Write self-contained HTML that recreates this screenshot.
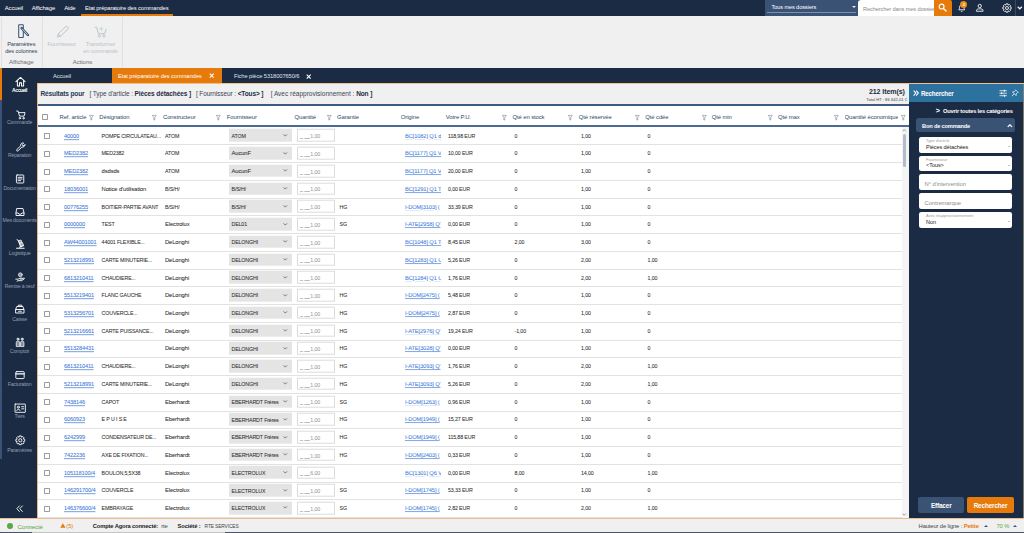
<!DOCTYPE html>
<html><head><meta charset="utf-8"><title>Etat préparatoire des commandes</title>
<style>
*{box-sizing:border-box;margin:0;padding:0}
html,body{width:1024px;height:533px;overflow:hidden;background:#f0f0f0;font-family:"Liberation Sans",sans-serif;font-size:5.6px;color:#333;-webkit-font-smoothing:antialiased}
.abs,.t{position:absolute;white-space:nowrap}
.t{line-height:1;transform:translateY(-50%)}
a{text-decoration:underline;text-decoration-thickness:.5px;text-underline-offset:.6px;text-decoration-color:rgba(60,120,216,.7);color:#3c78d8}
svg{position:absolute;overflow:visible}
/* top bar */
#topbar{position:absolute;left:0;top:0;width:1024px;height:16.3px;background:#1b2b44}
#topbar .m{position:absolute;top:9px;color:#fff;font-size:5.9px;letter-spacing:-.12px;line-height:1;transform:translateY(-50%);white-space:nowrap}
#actul{position:absolute;left:81px;top:14.4px;width:92px;height:2px;background:#e67a0a}
#dossiers{position:absolute;left:765px;top:0;width:93.5px;height:16.3px;background:#3a5375}
#dossiers .ul{position:absolute;left:2.4px;right:2.6px;top:11.5px;height:.8px;background:#7a91b2}
#search{position:absolute;left:858.2px;top:.2px;width:76.3px;height:15.5px;background:#fff;border-radius:3px 0 0 0;overflow:hidden}
#sbtn{position:absolute;left:934.3px;top:0;width:17.8px;height:15.7px;background:#e67a0a;border-radius:0 2px 0 0}
/* ribbon */
#ribbon{position:absolute;left:0;top:16.3px;width:1024px;height:51.7px;background:#f0f0f0}
.rsep{position:absolute;top:17px;width:.8px;height:50px;background:#e0e0e0}
.rl{position:absolute;font-size:5.7px;line-height:7.2px;text-align:center;color:#2f3f58;white-space:nowrap;transform:translateX(-50%);letter-spacing:-.12px}
.rl.dis{color:#bcc3cd}
.rg{position:absolute;font-size:6.1px;color:#6a6f78;transform:translate(-50%,-50%);line-height:1;letter-spacing:-.1px}
/* tabs */
#tabs{position:absolute;left:0;top:68px;width:1024px;height:15.2px;background:#1b2b44}
#tabs .tx{position:absolute;top:9px;font-size:5.75px;color:#dfe4ea;line-height:1;transform:translateY(-50%);white-space:nowrap;letter-spacing:-.1px}
#acttab{position:absolute;left:111.6px;top:0;width:110.2px;height:15.2px;background:#e67a0a}
/* sidebar */
#side{position:absolute;left:0;top:68px;width:37.2px;height:450px;background:#1b2b44}
#side .st1{position:absolute;left:0;top:0;width:2.2px;height:32.4px;background:#e67a0a}
#side .st2{position:absolute;left:0;top:32.4px;width:2.2px;height:358.6px;background:#3a5375}
.sl{position:absolute;left:19.6px;font-size:5.2px;color:#929eb0;transform:translate(-50%,-50%);line-height:1;white-space:nowrap;letter-spacing:-.2px;margin-top:.7px}
.sl.on{color:#fff;font-weight:bold;letter-spacing:-.4px;font-size:5px;margin-top:.1px}
.si{stroke:#fff;fill:none;stroke-width:1.1;stroke-linecap:round;stroke-linejoin:round}
/* content header */
#content{position:absolute;left:37.2px;top:83.2px;width:872px;height:435px;background:#fff}
#ohl{position:absolute;left:37.2px;top:82.8px;width:986.8px;height:.9px;background:#f0c08a}
#ovl{position:absolute;left:37px;top:83px;width:.9px;height:434.5px;background:#e8b887}
#obl{position:absolute;left:0;top:517.6px;width:1024px;height:.9px;background:#ebbd90}
#resbar{position:absolute;left:38px;top:84px;width:871.3px;height:20.3px;background:#f0f0f0}
.bl{position:absolute;left:38px;width:871.3px;background:#3d5a82}
#thead{position:absolute;left:38px;top:106px;width:871.3px;height:19.6px;background:#fff}
.th{position:absolute;top:118.4px;font-size:5.95px;color:#304a6b;line-height:1;transform:translateY(-50%);white-space:nowrap;letter-spacing:-.12px}
.fi{position:absolute;top:114.6px;width:4.6px;height:5.4px}
.fi path{fill:none;stroke:#858e9b;stroke-width:.65}
/* rows */
#grid{position:absolute;left:0;top:0;width:0;height:0}
.row{position:absolute;left:38px;width:863.6px;height:17.76px;border-bottom:.8px solid #e2e2e2}
.row>*{position:absolute;top:8.9px;line-height:1;transform:translateY(-50%);white-space:nowrap;font-size:5.3px;letter-spacing:-.14px;color:#2c2c2c;-webkit-text-stroke:.05px currentColor}
.row .cb{left:5.8px;top:8.5px;width:6px;height:6px;border:.75px solid #9c9c9c;border-radius:.8px;background:#fff}
.row a.ref{left:26px;color:#3c78d8;font-size:5.65px}
.row .des{left:63.6px}
.row .lc{font-size:5.85px;letter-spacing:-.12px}
.row .con{left:127px}
.row .sel{left:190.8px;top:7.7px;width:63.6px;height:12.6px;background:#e4e4e4}
.row .sel b{position:absolute;left:2.7px;top:7.3px;transform:translateY(-50%);font-weight:normal;line-height:1}
.row .sel svg{left:54.6px;top:4.5px;width:4.6px;height:3.1px}
.row .sel svg path{fill:none;stroke:#555;stroke-width:1.35}
.row .qin{left:259px;top:7.8px;width:37.6px;height:12.6px;background:#fff;border:.8px solid #dcdcdc;color:#9a9a9a;padding:3.7px 0 0 2px}
.row .qin u{text-decoration:none;color:#555;margin-right:.6px}
.row .gar{left:301.6px}
.row a.ori{left:367px;color:#3c78d8;font-size:5.75px;width:36.4px;overflow:hidden}
.row .pu{left:410px}
.row .stk{left:476.6px}
.row .res{left:543px}
.row .cde{left:609.6px}
/* right panel */
#rp{position:absolute;left:909.3px;top:83.2px;width:114.7px;height:434.6px;background:#1b2b44}
#rph{position:absolute;left:0;top:0;width:113.6px;height:18.8px;background:#2d719e;border-radius:2.5px 0 0 0}
.inp{position:absolute;left:9.8px;width:93.2px;height:15.6px;background:#fff;border-radius:2.2px}
.inp .lab{position:absolute;left:7px;top:4.2px;font-size:4px;color:#9a9a9a;line-height:1;transform:translateY(-50%);white-space:nowrap}
.inp .val{position:absolute;left:7px;top:10.6px;font-size:5.55px;color:#222;line-height:1;transform:translateY(-50%);white-space:nowrap;letter-spacing:-.1px}
.inp .ph{position:absolute;left:5.4px;top:10.9px;font-size:5.9px;color:#8e8e8e;line-height:1;transform:translateY(-50%);white-space:nowrap;letter-spacing:-.1px}
.inp .ar{position:absolute;right:1.9px;top:9.4px;width:0;height:0;border-left:1.7px solid transparent;border-right:1.7px solid transparent;border-top:1.9px solid #8c8c8c}
.btn{position:absolute;top:413.9px;height:16.4px;border-radius:2px;color:#fff;font-weight:bold;font-size:6.4px;text-align:center;line-height:17.2px;letter-spacing:-.15px}
/* status */
#status{position:absolute;left:0;top:518.4px;width:1024px;height:14.6px;background:#f0f0f0}
#status .t{top:8.4px;font-size:5.8px;letter-spacing:-.12px}
#sbot{position:absolute;left:0;top:531.6px;width:1024px;height:1.4px;background:#4b5668}

</style></head><body>
<div id="topbar">
 <span class="m" style="left:4.8px">Accueil</span>
 <span class="m" style="left:31.7px">Affichage</span>
 <span class="m" style="left:64.2px">Aide</span>
 <span class="m" style="left:84.9px;font-size:5.8px">Etat préparatoire des commandes</span>
 <div id="actul"></div>
 <div id="dossiers"><span class="m" style="left:6.5px;top:7.800px;font-size:5.650px">Tous mes dossiers</span><div class="ul"></div>
  <div class="abs" style="right:2.400px;top:5.900px;width:0;height:0;border-left:2.300px solid transparent;border-right:2.300px solid transparent;border-top:2.500px solid #e6ecf5"></div></div>
 <div id="search"><span class="t" style="left:4.900px;top:10.300px;font-size:5.650px;color:#8a8a8a;letter-spacing:-.12px">Rechercher dans mes dossiers</span></div>
 <div id="sbtn"><svg viewBox="0 0 10 10" style="left:3.600px;top:3.200px;width:9px;height:9px"><circle cx="4" cy="4" r="2.7" fill="none" stroke="#fff" stroke-width="1.3"/><path d="M6 6l3 3" stroke="#fff" stroke-width="1.5" stroke-linecap="round"/></svg></div>
 <!-- bell -->
 <svg viewBox="0 0 12 12" style="left:957px;top:3px;width:9.5px;height:9.5px"><path d="M2.2 8.6c1-1 .9-2 .9-3.3 0-1.8 1.2-3 2.9-3s2.9 1.200 2.900 3c0 1.300-.1 2.300.9 3.300z" fill="none" stroke="#fff" stroke-width="1.100" stroke-linejoin="round"/><path d="M4.900 10.100a1.200 1.200 0 0 0 2.200 0" fill="none" stroke="#fff" stroke-width="1"/></svg>
 <div class="abs" style="left:960.300px;top:.9px;width:7.200px;height:7.200px;border-radius:50%;background:#ee8d18;color:#fff;font-size:4.200px;font-weight:bold;text-align:center;line-height:7.400px">2</div>
 <!-- user -->
 <svg viewBox="0 0 12 12" style="left:975.100px;top:3.200px;width:9.500px;height:9.500px"><circle cx="6" cy="3.800" r="2.100" fill="none" stroke="#fff" stroke-width="1.100"/><path d="M1.800 10.400v-1c0-1.400 2.100-2.100 4.200-2.100s4.200.7 4.200 2.100v1z" fill="none" stroke="#fff" stroke-width="1.100" stroke-linejoin="round"/></svg>
 <!-- gear -->
 <svg viewBox="0 0 24 24" style="left:1002.400px;top:3.100px;width:10px;height:10px"><path fill="none" stroke="#fff" stroke-width="2.1" stroke-linejoin="round" d="M9.23 4.92L10.01 2.00L13.99 2.00L14.77 4.92L15.05 5.04L17.67 3.52L20.48 6.33L18.96 8.95L19.08 9.23L22.00 10.01L22.00 13.99L19.08 14.77L18.96 15.05L20.48 17.67L17.67 20.48L15.05 18.96L14.77 19.08L13.99 22.00L10.01 22.00L9.23 19.08L8.95 18.96L6.33 20.48L3.52 17.67L5.04 15.05L4.92 14.77L2.00 13.99L2.00 10.01L4.92 9.23L5.04 8.95L3.52 6.33L6.33 3.52L8.95 5.04zM12 8.400a3.600 3.600 0 1 0 0 7.200a3.600 3.600 0 1 0 0-7.200z"/></svg>
 <div class="abs" style="left:1015.300px;top:0;width:.7px;height:16.300px;background:#3a4a63"></div>
 <svg viewBox="0 0 8 5" style="left:1016.800px;top:6.200px;width:5.600px;height:3.500px"><path d="M1 1l3 3l3-3" fill="none" stroke="#e8f0fa" stroke-width="1.800"/></svg>
</div>
<div id="ribbon"></div>
<div class="rsep" style="left:.6px"></div><div class="rsep" style="left:42px"></div><div class="rsep" style="left:122px"></div>
<!-- ribbon: colonnes icon -->
<svg viewBox="0 0 14 16" style="left:16px;top:23px;width:14px;height:16px"><rect x="2.700" y="1.700" width="4.600" height="12.700" rx=".5" fill="none" stroke="#3a5375" stroke-width="1.050"/><path d="M5.600 5.100l6.300 6.900" stroke="#3a5375" stroke-width="2.400" stroke-linecap="round"/><path d="M6.300 5.900l5 5.500" stroke="#e9edf2" stroke-width=".8" stroke-linecap="round"/></svg>
<div class="rl" style="left:21.300px;top:40.600px">Paramètres<br>des colonnes</div>
<div class="rg" style="left:21.300px;top:62px">Affichage</div>
<!-- pencil -->
<svg viewBox="0 0 14 14" style="left:55.500px;top:25px;width:13.500px;height:13.500px"><path d="M1.500 12.500l.9-3.300 7.400-7.400c.6-.6 1.500-.6 2.100 0l.3.300c.6.600.6 1.500 0 2.100l-7.400 7.400zM2.500 9.300l2.200 2.200" fill="none" stroke="#b7c1cf" stroke-width="1"/></svg>
<div class="rl dis" style="left:61.800px;top:40.600px">Fournisseur</div>
<!-- cart+ -->
<svg viewBox="0 0 16 14" style="left:94px;top:26px;width:14px;height:12.200px"><path d="M.8 1.500h2.200l2 7.300h7.300l1.700-5.200" fill="none" stroke="#b7c1cf" stroke-width="1.100" stroke-linejoin="round"/><circle cx="6" cy="11.400" r="1.300" fill="none" stroke="#b7c1cf" stroke-width="1"/><circle cx="11.300" cy="11.400" r="1.300" fill="none" stroke="#b7c1cf" stroke-width="1"/><path d="M8.300 1.200v4M6.300 3.200h4" stroke="#b9dcb0" stroke-width="1"/></svg>
<div class="rl dis" style="left:100.500px;top:40.600px">Transformer<br>en commande</div>
<div class="rg" style="left:82.500px;top:62px">Actions</div>
<!-- tabs -->
<div id="tabs">
 <span class="tx" style="left:53px">Accueil</span>
 <div id="acttab"></div>
 <span class="tx" style="left:118px;color:#fff">Etat préparatoire des commandes</span>
 <svg viewBox="0 0 6 6" style="left:209.400px;top:5.300px;width:5.400px;height:5.400px"><path d="M.8.800l4.400 4.400M5.200.8l-4.400 4.400" stroke="#fff" stroke-width="1.250"/></svg>
 <span class="tx" style="left:234px">Fiche pièce 5318007650/6</span>
 <svg viewBox="0 0 6 6" style="left:306px;top:6.400px;width:5.400px;height:5.400px"><path d="M.8.800l4.400 4.400M5.200.8l-4.400 4.400" stroke="#fff" stroke-width="1.250"/></svg>
</div>
<div id="side"><div class="st1"></div><div class="st2"></div>
 <!-- home -->
 <svg class="si" viewBox="0 0 12 12" style="left:14.600px;top:7.700px;width:11px;height:11px"><path d="M1 6.200l5-4.600 5 4.600M2.600 5.200v5.600h2.300v-3.300h2.200v3.300h2.300v-5.600"/></svg>
 <span class="sl on" style="top:22.200px">Accueil</span>
 <!-- cart -->
 <svg class="si" viewBox="0 0 12 12" style="left:15.900px;top:41.800px;width:9.800px;height:9.800px"><path d="M.8 1.300h1.800l1.700 6.200h5.600l1.200-4.300h-8"/><circle cx="4.700" cy="10" r=".9"/><circle cx="9.200" cy="10" r=".9"/></svg>
 <span class="sl" style="top:54.600px">Commande</span>
 <!-- wrench -->
 <svg class="si" viewBox="0 0 12 12" style="left:15.800px;top:73.800px;width:10px;height:10px"><path d="M10.800 3.400a2.800 2.800 0 0 1-3.800 2.600l-4.400 4.600a1.100 1.100 0 0 1-1.600-1.600l4.600-4.400a2.800 2.800 0 0 1 3.600-3.400l-1.700 1.700.4 1.300 1.300.4z"/></svg>
 <span class="sl" style="top:87.500px">Réparation</span>
 <!-- doc -->
 <svg class="si" viewBox="0 0 12 12" style="left:15.400px;top:106.200px;width:10.200px;height:10px"><rect x="1.600" y="1.200" width="8.800" height="9.600" rx=".8"/><path d="M3.600 4h4.800M3.600 6h4.800M3.600 8h3"/></svg>
 <span class="sl" style="top:120.200px">Documentation</span>
 <!-- inbox -->
 <svg class="si" viewBox="0 0 12 12" style="left:15px;top:138.500px;width:10px;height:10px"><path d="M1.200 7.200v3h9.600v-3l-1.300-5.400h-7zM1.200 7.200h2.600l.8 1.400h2.800l.8-1.400h2.600"/></svg>
 <span class="sl" style="top:152.600px">Mes documents</span>
 <!-- logistique -->
 <svg class="si" viewBox="0 0 12 12" style="left:15px;top:170.800px;width:10.400px;height:10.400px"><path d="M2.400.9l1.300.5 3 7.600M1.800 10.700h8.800M5 9.600l5-1.900" stroke-width="1.150"/><path d="M4.300 2.100l2.700-1 1.100 2.700-2.700 1zM5.600 5.200l3-1.100 1.200 3-3 1.100z" fill="rgba(255,255,255,.55)" stroke-width=".8"/></svg>
 <span class="sl" style="top:185.200px">Logistique</span>
 <!-- remise a neuf -->
 <svg class="si" viewBox="0 0 12 12" style="left:15px;top:203.500px;width:10px;height:10px"><path d="M1 8.600h2.600l2.600-1.300h2.200c.8 0 .8 1.200 0 1.200h-2.200M8.800 8.200l1.800-1c.7-.3 1.100.6.500 1l-3 2.200h-4.500l-1.100.6"/><circle cx="6.400" cy="3.300" r="2.300" fill="rgba(255,255,255,.5)" stroke-width=".8"/></svg>
 <span class="sl" style="top:217.700px;font-size:5px">Remise à neuf</span>
 <!-- caisse -->
 <svg class="si" viewBox="0 0 12 12" style="left:15px;top:236.300px;width:10px;height:10px"><path d="M4 3v-1.600h4v1.600M2.600 3h6.800l1.400 3.600h-9.600zM1.200 6.600h9.600v4.200h-9.600zM4.400 8.700h3.200"/></svg>
 <span class="sl" style="top:251.300px">Caisse</span>
 <!-- comptoir -->
 <svg class="si" viewBox="0 0 12 12" style="left:14.900px;top:269.300px;width:10.200px;height:10.200px" fill="rgba(255,255,255,.5)"><circle cx="3.500" cy="2.500" r="1.250" style="fill:rgba(255,255,255,.6);stroke-width:.8"/><circle cx="8.500" cy="2.500" r="1.250" style="fill:rgba(255,255,255,.6);stroke-width:.8"/><path style="fill:rgba(255,255,255,.45);stroke-width:.9" d="M1.500 10.800v-4.200c0-1.200.8-1.800 2-1.800s2 .6 2 1.800v4.200zM6.500 10.800v-4.200c0-1.200.8-1.800 2-1.800s2 .6 2 1.800v4.200z"/></svg>
 <span class="sl" style="top:283.200px">Comptoir</span>
 <!-- facturation -->
 <svg class="si" viewBox="0 0 12 12" style="left:15px;top:302.300px;width:10px;height:10px"><rect x="1" y="1.900" width="10" height="8.400" rx="1"/><path d="M1 4.600h10" stroke-width="1.700"/></svg>
 <span class="sl" style="top:316.300px">Facturation</span>
 <!-- tiers -->
 <svg class="si" viewBox="0 0 12 12" style="left:13.600px;top:333.600px;width:12.400px;height:12.400px;stroke-width:.85"><rect x="1" y="2" width="10" height="8" rx=".3"/><circle cx="4.200" cy="5" r="1"/><path d="M2.600 8.200c0-1.600 3.200-1.600 3.200 0M7.400 4.600h2M7.400 6.600h2"/></svg>
 <span class="sl" style="top:348.800px">Tiers</span>
 <!-- parametres -->
 <svg viewBox="0 0 24 24" style="left:14.700px;top:367.300px;width:10.600px;height:10.600px"><path fill="none" stroke="#fff" stroke-width="2.1" stroke-linejoin="round" d="M9.23 4.92L10.01 2.00L13.99 2.00L14.77 4.92L15.05 5.04L17.67 3.52L20.48 6.33L18.96 8.95L19.08 9.23L22.00 10.01L22.00 13.99L19.08 14.77L18.96 15.05L20.48 17.67L17.67 20.48L15.05 18.96L14.77 19.08L13.99 22.00L10.01 22.00L9.23 19.08L8.95 18.96L6.33 20.48L3.52 17.67L5.04 15.05L4.92 14.77L2.00 13.99L2.00 10.01L4.92 9.23L5.04 8.95L3.52 6.33L6.33 3.52L8.95 5.04zM12 8.400a3.600 3.600 0 1 0 0 7.200a3.600 3.600 0 1 0 0-7.200z"/></svg>
 <span class="sl" style="top:382px">Paramètres</span>
 <svg class="si" viewBox="0 0 10 10" style="left:16px;top:436.500px;width:7.400px;height:7.400px"><path d="M4.600 1.200l-3.400 3.800 3.400 3.800M8.600 1.200l-3.400 3.800 3.400 3.800" stroke-width="1.200"/></svg>
</div>
<div id="content"></div>
<div id="resbar">
 <span class="t" style="left:2.400px;top:10px;font-size:6.600px;font-weight:bold;color:#2b3a52;letter-spacing:-.15px">Résultats pour</span>
 <span class="t" style="left:51.500px;top:10.100px;font-size:6.500px;color:#3c4656;letter-spacing:-.1px">[ Type d'article : <b style="color:#1f2c42">Pièces détachées ]</b><span style="margin-left:4.900px">[ Fournisseur : </span><b style="color:#1f2c42">&lt;Tous&gt; ]</b><span style="margin-left:7.200px;letter-spacing:0">[ Avec réapprovisionnement : </span><b style="color:#1f2c42">Non ]</b></span>
 <span class="t" style="right:4.600px;top:8.200px;font-size:7.050px;font-weight:bold;color:#222c3c;letter-spacing:-.1px">212 Item(s)</span>
 <span class="t" style="right:2.300px;top:15.500px;font-size:4.150px;color:#444">Total HT : 86 642,01 €</span>
</div>
<div class="bl" style="top:104.200px;height:1.800px"></div>
<div id="thead"></div>
<div class="bl" style="top:125.400px;height:1.500px;background:#4d6a91"></div>
<div class="abs" style="left:41.600px;top:114px;width:6.400px;height:6.400px;border:.75px solid #9c9c9c;border-radius:.8px;background:#fff"></div>
<span class="th" style="left:59.500px">Ref. article</span>
<span class="th" style="left:99.300px">Désignation</span>
<span class="th" style="left:163px">Constructeur</span>
<span class="th" style="left:226.800px">Fournisseur</span>
<span class="th" style="left:294.500px">Quantité</span>
<span class="th" style="left:337px">Garantie</span>
<span class="th" style="left:400.800px">Origine</span>
<span class="th" style="left:445.800px">Votre P.U.</span>
<span class="th" style="left:512.500px">Qté en stock</span>
<span class="th" style="left:578.800px">Qté réservée</span>
<span class="th" style="left:645.300px">Qté cdée</span>
<span class="th" style="left:711.800px">Qté min</span>
<span class="th" style="left:778px">Qté max</span>
<div class="abs" style="left:844.500px;top:112px;width:53.200px;height:12px;overflow:hidden"><span class="th" style="left:0;top:6.400px">Quantité économique</span></div>
<svg class="fi" viewBox="0 0 4.600 5.400" style="left:88.6px"><path d="M.3.400h4l-1.500 2v2.600h-1v-2.600z"/></svg>
<svg class="fi" viewBox="0 0 4.600 5.400" style="left:152.3px"><path d="M.3.400h4l-1.500 2v2.600h-1v-2.600z"/></svg>
<svg class="fi" viewBox="0 0 4.600 5.400" style="left:215.8px"><path d="M.3.400h4l-1.500 2v2.600h-1v-2.600z"/></svg>
<svg class="fi" viewBox="0 0 4.600 5.400" style="left:326.6px"><path d="M.3.400h4l-1.500 2v2.600h-1v-2.600z"/></svg>
<svg class="fi" viewBox="0 0 4.600 5.400" style="left:502px"><path d="M.3.400h4l-1.500 2v2.600h-1v-2.600z"/></svg>
<svg class="fi" viewBox="0 0 4.600 5.400" style="left:568.3px"><path d="M.3.400h4l-1.500 2v2.600h-1v-2.600z"/></svg>
<svg class="fi" viewBox="0 0 4.600 5.400" style="left:634.8px"><path d="M.3.400h4l-1.500 2v2.600h-1v-2.600z"/></svg>
<svg class="fi" viewBox="0 0 4.600 5.400" style="left:701.5px"><path d="M.3.400h4l-1.500 2v2.600h-1v-2.600z"/></svg>
<svg class="fi" viewBox="0 0 4.600 5.400" style="left:768.3px"><path d="M.3.400h4l-1.500 2v2.600h-1v-2.600z"/></svg>
<svg class="fi" viewBox="0 0 4.600 5.400" style="left:834.3px"><path d="M.3.400h4l-1.500 2v2.600h-1v-2.600z"/></svg>
<svg class="fi" viewBox="0 0 4.600 5.400" style="left:901px"><path d="M.3.400h4l-1.500 2v2.600h-1v-2.600z"/></svg>
<div id="grid">
<div class="row" style="top:127.65px"><i class="cb"></i><a class="ref">40000</a><span class="c des">POMPE CIRCULATEAU...</span><span class="c con">ATOM</span><span class="sel"><b class="">ATOM</b><svg viewBox="0 0 8 5"><path d="M1 1l3 3l3-3"/></svg></span><span class="qin"><u>_ __</u>1,00</span><span class="c gar"></span><a class="ori">BC[1082] Q1 d</a><span class="c pu">118,98 EUR</span><span class="c stk">0</span><span class="c res">1,00</span><span class="c cde">0</span></div>
<div class="row" style="top:145.40px"><i class="cb"></i><a class="ref">MED2382</a><span class="c des">MED2382</span><span class="c con">ATOM</span><span class="sel"><b class="lc">AucunF</b><svg viewBox="0 0 8 5"><path d="M1 1l3 3l3-3"/></svg></span><span class="qin"><u>_ __</u>1,00</span><span class="c gar"></span><a class="ori">BC[1177] Q1 V</a><span class="c pu">10,00 EUR</span><span class="c stk">0</span><span class="c res">1,00</span><span class="c cde">0</span></div>
<div class="row" style="top:163.14px"><i class="cb"></i><a class="ref">MED2382</a><span class="c des lc">dsdsds</span><span class="c con">ATOM</span><span class="sel"><b class="lc">AucunF</b><svg viewBox="0 0 8 5"><path d="M1 1l3 3l3-3"/></svg></span><span class="qin"><u>_ __</u>1,00</span><span class="c gar"></span><a class="ori">BC[1177] Q1 V</a><span class="c pu">20,00 EUR</span><span class="c stk">0</span><span class="c res">1,00</span><span class="c cde">0</span></div>
<div class="row" style="top:180.88px"><i class="cb"></i><a class="ref">18036001</a><span class="c des lc">Notice d'utilisation</span><span class="c con">B/S/H/</span><span class="sel"><b class="">B/S/H/</b><svg viewBox="0 0 8 5"><path d="M1 1l3 3l3-3"/></svg></span><span class="qin"><u>_ __</u>1,00</span><span class="c gar"></span><a class="ori">BC[1291] Q1 T</a><span class="c pu">0,00 EUR</span><span class="c stk">0</span><span class="c res">1,00</span><span class="c cde">0</span></div>
<div class="row" style="top:198.63px"><i class="cb"></i><a class="ref">00776255</a><span class="c des">BOITIER-PARTIE AVANT</span><span class="c con">B/S/H/</span><span class="sel"><b class="">B/S/H/</b><svg viewBox="0 0 8 5"><path d="M1 1l3 3l3-3"/></svg></span><span class="qin"><u>_ __</u>1,00</span><span class="c gar">HG</span><a class="ori">I-DOM[3103] (</a><span class="c pu">33,39 EUR</span><span class="c stk">0</span><span class="c res">1,00</span><span class="c cde">0</span></div>
<div class="row" style="top:216.38px"><i class="cb"></i><a class="ref">0000000</a><span class="c des">TEST</span><span class="c con lc">Electrolux</span><span class="sel"><b class="">DEL01</b><svg viewBox="0 0 8 5"><path d="M1 1l3 3l3-3"/></svg></span><span class="qin"><u>_ __</u>1,00</span><span class="c gar">SG</span><a class="ori">I-ATE[2958] Q'</a><span class="c pu">0,00 EUR</span><span class="c stk">0</span><span class="c res">1,00</span><span class="c cde">0</span></div>
<div class="row" style="top:234.12px"><i class="cb"></i><a class="ref">AW44001001</a><span class="c des">44001 FLEXIBLE...</span><span class="c con lc">DeLonghi</span><span class="sel"><b class="">DELONGHI</b><svg viewBox="0 0 8 5"><path d="M1 1l3 3l3-3"/></svg></span><span class="qin"><u>_ __</u>1,00</span><span class="c gar"></span><a class="ori">BC[1048] Q1 T</a><span class="c pu">8,45 EUR</span><span class="c stk">2,00</span><span class="c res">3,00</span><span class="c cde">0</span></div>
<div class="row" style="top:251.87px"><i class="cb"></i><a class="ref">5213218991</a><span class="c des">CARTE MINUTERIE...</span><span class="c con lc">DeLonghi</span><span class="sel"><b class="">DELONGHI</b><svg viewBox="0 0 8 5"><path d="M1 1l3 3l3-3"/></svg></span><span class="qin"><u>_ __</u>1,00</span><span class="c gar"></span><a class="ori">BC[1283] Q1 U</a><span class="c pu">5,26 EUR</span><span class="c stk">0</span><span class="c res">2,00</span><span class="c cde">1,00</span></div>
<div class="row" style="top:269.61px"><i class="cb"></i><a class="ref">6813210411</a><span class="c des">CHAUDIERE...</span><span class="c con lc">DeLonghi</span><span class="sel"><b class="">DELONGHI</b><svg viewBox="0 0 8 5"><path d="M1 1l3 3l3-3"/></svg></span><span class="qin"><u>_ __</u>1,00</span><span class="c gar"></span><a class="ori">BC[1284] Q1 U</a><span class="c pu">1,76 EUR</span><span class="c stk">0</span><span class="c res">2,00</span><span class="c cde">1,00</span></div>
<div class="row" style="top:287.36px"><i class="cb"></i><a class="ref">5513219401</a><span class="c des">FLANC GAUCHE</span><span class="c con lc">DeLonghi</span><span class="sel"><b class="">DELONGHI</b><svg viewBox="0 0 8 5"><path d="M1 1l3 3l3-3"/></svg></span><span class="qin"><u>_ __</u>1,00</span><span class="c gar">HG</span><a class="ori">I-DOM[2475] (</a><span class="c pu">5,48 EUR</span><span class="c stk">0</span><span class="c res">1,00</span><span class="c cde">0</span></div>
<div class="row" style="top:305.10px"><i class="cb"></i><a class="ref">5313256701</a><span class="c des">COUVERCLE...</span><span class="c con lc">DeLonghi</span><span class="sel"><b class="">DELONGHI</b><svg viewBox="0 0 8 5"><path d="M1 1l3 3l3-3"/></svg></span><span class="qin"><u>_ __</u>1,00</span><span class="c gar">HG</span><a class="ori">I-DOM[2475] (</a><span class="c pu">2,87 EUR</span><span class="c stk">0</span><span class="c res">1,00</span><span class="c cde">0</span></div>
<div class="row" style="top:322.85px"><i class="cb"></i><a class="ref">5213216661</a><span class="c des">CARTE PUISSANCE...</span><span class="c con lc">DeLonghi</span><span class="sel"><b class="">DELONGHI</b><svg viewBox="0 0 8 5"><path d="M1 1l3 3l3-3"/></svg></span><span class="qin"><u>_ __</u>1,00</span><span class="c gar">HG</span><a class="ori">I-ATE[2976] Q'</a><span class="c pu">19,24 EUR</span><span class="c stk">-1,00</span><span class="c res">1,00</span><span class="c cde">0</span></div>
<div class="row" style="top:340.59px"><i class="cb"></i><a class="ref">5513284431</a><span class="c des"></span><span class="c con lc">DeLonghi</span><span class="sel"><b class="">DELONGHI</b><svg viewBox="0 0 8 5"><path d="M1 1l3 3l3-3"/></svg></span><span class="qin"><u>_ __</u>1,00</span><span class="c gar">HG</span><a class="ori">I-ATE[3028] Q'</a><span class="c pu">0,00 EUR</span><span class="c stk">0</span><span class="c res">1,00</span><span class="c cde">0</span></div>
<div class="row" style="top:358.34px"><i class="cb"></i><a class="ref">6813210411</a><span class="c des">CHAUDIERE...</span><span class="c con lc">DeLonghi</span><span class="sel"><b class="">DELONGHI</b><svg viewBox="0 0 8 5"><path d="M1 1l3 3l3-3"/></svg></span><span class="qin"><u>_ __</u>1,00</span><span class="c gar">HG</span><a class="ori">I-ATE[3093] Q'</a><span class="c pu">1,76 EUR</span><span class="c stk">0</span><span class="c res">2,00</span><span class="c cde">1,00</span></div>
<div class="row" style="top:376.08px"><i class="cb"></i><a class="ref">5213218991</a><span class="c des">CARTE MINUTERIE...</span><span class="c con lc">DeLonghi</span><span class="sel"><b class="">DELONGHI</b><svg viewBox="0 0 8 5"><path d="M1 1l3 3l3-3"/></svg></span><span class="qin"><u>_ __</u>1,00</span><span class="c gar">HG</span><a class="ori">I-ATE[3093] Q'</a><span class="c pu">5,26 EUR</span><span class="c stk">0</span><span class="c res">2,00</span><span class="c cde">1,00</span></div>
<div class="row" style="top:393.83px"><i class="cb"></i><a class="ref">7438146</a><span class="c des">CAPOT</span><span class="c con lc">Eberhardt</span><span class="sel"><b class="">EBERHARDT Frères</b><svg viewBox="0 0 8 5"><path d="M1 1l3 3l3-3"/></svg></span><span class="qin"><u>_ __</u>1,00</span><span class="c gar">SG</span><a class="ori">I-DOM[1263] (</a><span class="c pu">0,96 EUR</span><span class="c stk">0</span><span class="c res">1,00</span><span class="c cde">0</span></div>
<div class="row" style="top:411.57px"><i class="cb"></i><a class="ref">6060923</a><span class="c des">E P U I S E</span><span class="c con lc">Eberhardt</span><span class="sel"><b class="">EBERHARDT Frères</b><svg viewBox="0 0 8 5"><path d="M1 1l3 3l3-3"/></svg></span><span class="qin"><u>_ __</u>1,00</span><span class="c gar">HG</span><a class="ori">I-DOM[1949] (</a><span class="c pu">15,27 EUR</span><span class="c stk">0</span><span class="c res">1,00</span><span class="c cde">0</span></div>
<div class="row" style="top:429.32px"><i class="cb"></i><a class="ref">6242999</a><span class="c des">CONDENSATEUR DE...</span><span class="c con lc">Eberhardt</span><span class="sel"><b class="">EBERHARDT Frères</b><svg viewBox="0 0 8 5"><path d="M1 1l3 3l3-3"/></svg></span><span class="qin"><u>_ __</u>1,00</span><span class="c gar">HG</span><a class="ori">I-DOM[1949] (</a><span class="c pu">115,88 EUR</span><span class="c stk">0</span><span class="c res">1,00</span><span class="c cde">0</span></div>
<div class="row" style="top:447.06px"><i class="cb"></i><a class="ref">7422236</a><span class="c des">AXE DE FIXATION...</span><span class="c con lc">Eberhardt</span><span class="sel"><b class="">EBERHARDT Frères</b><svg viewBox="0 0 8 5"><path d="M1 1l3 3l3-3"/></svg></span><span class="qin"><u>_ __</u>1,00</span><span class="c gar">HG</span><a class="ori">I-DOM[2403] (</a><span class="c pu">0,33 EUR</span><span class="c stk">0</span><span class="c res">1,00</span><span class="c cde">0</span></div>
<div class="row" style="top:464.81px"><i class="cb"></i><a class="ref">105118100/4</a><span class="c des">BOULON,5,5X38</span><span class="c con lc">Electrolux</span><span class="sel"><b class="">ELECTROLUX</b><svg viewBox="0 0 8 5"><path d="M1 1l3 3l3-3"/></svg></span><span class="qin"><u>_ __</u>6,00</span><span class="c gar"></span><a class="ori">BC[1301] Q6 V</a><span class="c pu">0,00 EUR</span><span class="c stk">8,00</span><span class="c res">14,00</span><span class="c cde">1,00</span></div>
<div class="row" style="top:482.55px"><i class="cb"></i><a class="ref">146291700/4</a><span class="c des">COUVERCLE</span><span class="c con lc">Electrolux</span><span class="sel"><b class="">ELECTROLUX</b><svg viewBox="0 0 8 5"><path d="M1 1l3 3l3-3"/></svg></span><span class="qin"><u>_ __</u>1,00</span><span class="c gar">SG</span><a class="ori">I-DOM[1745] (</a><span class="c pu">53,33 EUR</span><span class="c stk">0</span><span class="c res">1,00</span><span class="c cde">0</span></div>
<div class="row" style="top:500.30px"><i class="cb"></i><a class="ref">146376600/4</a><span class="c des">EMBRAYAGE</span><span class="c con lc">Electrolux</span><span class="sel"><b class="">ELECTROLUX</b><svg viewBox="0 0 8 5"><path d="M1 1l3 3l3-3"/></svg></span><span class="qin"><u>_ __</u>1,00</span><span class="c gar">SG</span><a class="ori">I-DOM[1745] (</a><span class="c pu">2,82 EUR</span><span class="c stk">0</span><span class="c res">2,00</span><span class="c cde">1,00</span></div>
</div><!-- grid scrollbar -->
<div class="abs" style="left:901.600px;top:127px;width:7.700px;height:390.800px;background:#f4f4f4"></div>
<svg viewBox="0 0 8 5" style="left:902.300px;top:128.800px;width:4.600px;height:2.800px"><path d="M1 4l3-3l3 3" fill="none" stroke="#666" stroke-width="1.100"/></svg>
<div class="abs" style="left:903px;top:133.500px;width:3.400px;height:33px;background:#b2bccb;border-radius:1.600px"></div>
<svg viewBox="0 0 8 5" style="left:902.300px;top:513px;width:4.600px;height:2.800px"><path d="M1 1l3 3l3-3" fill="none" stroke="#666" stroke-width="1.100"/></svg>
<div id="rp">
 <div id="rph">
  <svg viewBox="0 0 8 8" style="left:4px;top:7px;width:6.200px;height:6.200px"><path d="M.8.800l3 3.200-3 3.200M4 .8l3 3.200-3 3.200" fill="none" stroke="#fff" stroke-width="1.300"/></svg>
  <span class="t" style="left:11.600px;top:10.900px;font-size:6.300px;font-weight:bold;color:#fff;letter-spacing:-.2px">Rechercher</span>
  <svg viewBox="0 0 10 10" style="left:89.600px;top:5.600px;width:8.400px;height:8.400px"><path d="M.6 2h8.800M.6 5h8.800M.6 8h8.800" stroke="#fff" stroke-width=".9"/><path d="M6.400.8v2.400M3.200 3.800v2.400M6.400 6.800v2.400" stroke="#fff" stroke-width="1.300"/></svg>
  <svg viewBox="0 0 10 10" style="left:101.500px;top:5.600px;width:8px;height:8px"><path d="M5.600 1l3.400 3.400-1 .2-1.600 1.600-.1 2-4.500-4.500 2-.1 1.600-1.600zM4 6l-3 3" fill="none" stroke="#fff" stroke-width=".9" stroke-linejoin="round"/></svg>
 </div>
 <span class="t" style="left:26.500px;top:28.300px;font-size:7.200px;font-weight:bold;color:#fff">&gt;</span>
 <span class="t" style="left:33.800px;top:28.600px;font-size:5.700px;font-weight:bold;color:#fff;letter-spacing:-.2px">Ouvrir toutes les catégories</span>
 <div class="abs" style="left:6.900px;top:34.800px;width:98.800px;height:14.300px;background:#3a5375;border-radius:2.500px"></div>
 <span class="t" style="left:12.800px;top:43.500px;font-size:5.700px;font-weight:bold;color:#fff;letter-spacing:-.2px">Bon de commande</span>
 <svg viewBox="0 0 8 5" style="left:97.500px;top:40.500px;width:5.800px;height:3.700px"><path d="M1 4l3-3l3 3" fill="none" stroke="#fff" stroke-width="1.700"/></svg>
 <div class="inp" style="top:53.900px"><span class="lab">Type d'article</span><span class="val">Pièces détachées</span><i class="ar"></i></div>
 <div class="inp" style="top:72.600px"><span class="lab">Fournisseur</span><span class="val">&lt;Tous&gt;</span><i class="ar"></i></div>
 <div class="inp" style="top:91.300px"><span class="ph">N° d'intervention</span></div>
 <div class="inp" style="top:110.100px"><span class="ph">Contremarque</span></div>
 <div class="inp" style="top:128.800px"><span class="lab">Avec réapprovisionnement</span><span class="val">Non</span><i class="ar"></i></div>
 <div class="btn" style="left:8.600px;width:46.600px;background:#3a5375">Effacer</div>
 <div class="btn" style="left:57.800px;width:46.800px;background:#e67a0a">Rechercher</div>
 <div class="abs" style="left:113.700px;top:0;width:1px;height:434.600px;background:#817f66"></div>
</div>
<div id="ohl"></div><div id="ovl"></div>
<div id="status">
 <div class="abs" style="left:7.200px;top:4.800px;width:5.800px;height:5.800px;border-radius:50%;background:#5aa845"></div>
 <span class="t" style="left:17.600px;color:#5aa845;font-size:6.100px">Connecté</span>
 <svg viewBox="0 0 8 7" style="left:59.500px;top:4.900px;width:5.800px;height:5px"><path d="M4 .4l3.700 6.300h-7.400z" fill="#e67a0a"/></svg>
 <span class="t" style="left:66.300px;color:#e67a0a;font-size:5.900px">(5)</span>
 <span class="t" style="left:92.800px;font-weight:bold;color:#222;letter-spacing:-.16px">Compte Agora connecté:</span>
 <span class="t" style="left:161.300px;color:#444">rte</span>
 <span class="t" style="left:177.500px;font-weight:bold;color:#222">Société :</span>
 <span class="t" style="left:204.600px;color:#444;font-size:4.850px">RTE SERVICES</span>
 <span class="t" style="left:918.600px;color:#444">Hauteur de ligne : <b style="color:#e67a0a">Petite</b></span>
 <div class="abs" style="left:983.800px;top:6.200px;width:0;height:0;border-left:2.300px solid transparent;border-right:2.300px solid transparent;border-bottom:2.700px solid #3a5375"></div>
 <span class="t" style="left:996.500px;color:#5aa845">70 %</span>
 <div class="abs" style="left:1013.300px;top:6.200px;width:0;height:0;border-left:2.300px solid transparent;border-right:2.300px solid transparent;border-bottom:2.700px solid #3a5375"></div>
</div>
<div id="obl"></div><div id="sbot"></div><div class="abs" style="left:32px;top:531.600px;width:193px;height:1.400px;background:#c4c4c4"></div>

</body></html>
